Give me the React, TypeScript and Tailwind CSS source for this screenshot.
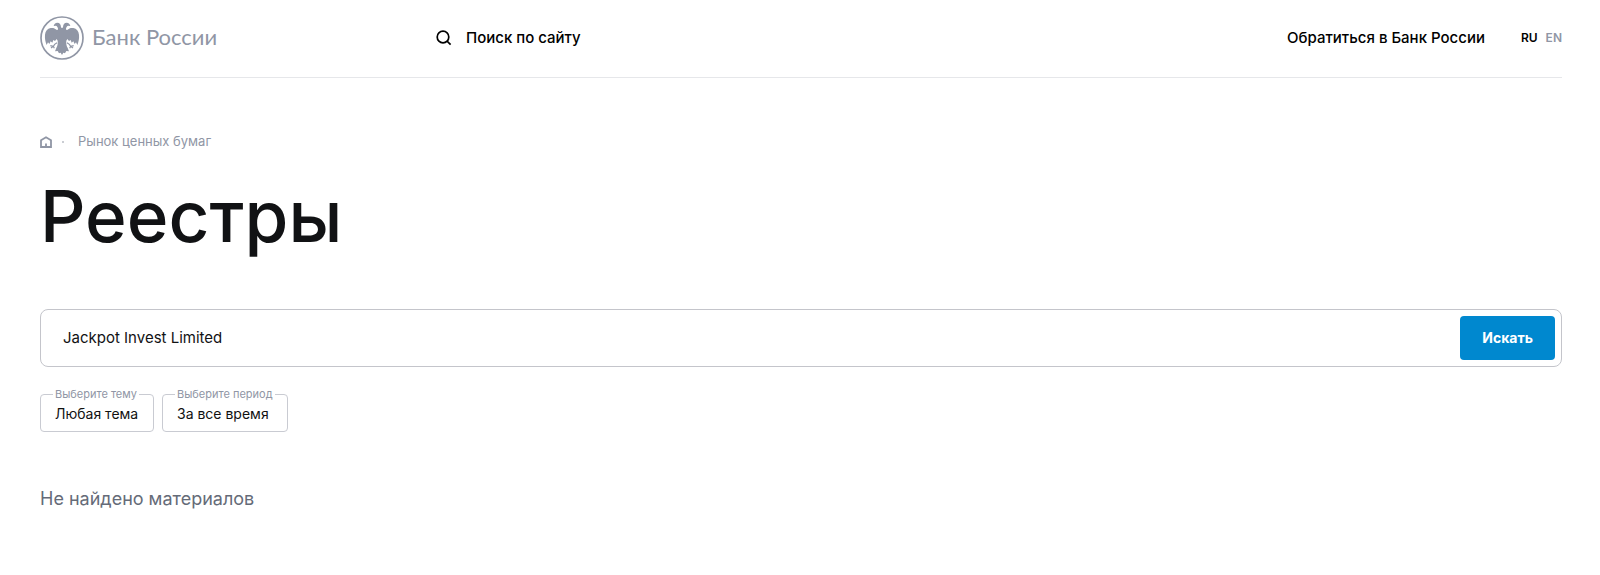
import { useState } from 'react';

function Emblem() {
  return (
    <svg viewBox="0 0 132 132" className="size-11 shrink-0 text-[#9096a5]" fill="currentColor" aria-hidden="true">
      <circle cx="66" cy="66" r="63" fill="none" stroke="currentColor" strokeWidth="5" />
      <path d="M66 37 L63 34 C63 25 59 20 52 20 C46 20 42 24 41 30 L48 29 C52 31 54 35 54 39 C54 43 50 43 47 40 C43 36 38 35 32 36 C22 38 16 46 15 56 C14 67 16 77 20 87 L24 79 L28 84 L32 76 L37 80 L40 72 L45 75 L50 69 L53 74 C54 82 53 89 49 96 L45 106 L53 105 L57 112 L62 110 L66 117 L70 110 L75 112 L79 105 L87 106 L83 96 C79 89 78 82 79 74 L82 69 L87 75 L92 72 L95 80 L100 76 L104 84 L108 79 L112 87 C116 77 118 67 117 56 C116 46 110 38 100 36 C94 35 89 36 85 40 C82 43 78 43 78 39 C78 35 80 31 84 29 L91 30 C90 24 86 20 80 20 C73 20 69 25 69 34 Z" />
      <path d="M51 80 L44 85 L40 91 L31 89 M40 91 L33 96 M40 91 L43 97 M81 80 L88 85 L92 91 L101 89 M92 91 L99 96 M92 91 L89 97" fill="none" stroke="currentColor" strokeWidth="3.5" />
    </svg>
  );
}

function FilterSelect({ id, label, options }: { id: string; label: string; options: string[] }) {
  return (
    <fieldset className="h-11 rounded border border-[#c9cbd2] px-3">
      <legend className="px-0.5 text-[11px] leading-3 text-[#9096a5]">
        <label htmlFor={id}>{label}</label>
      </legend>
      <select id={id} className="block h-7 appearance-none bg-transparent px-0.5 text-sm text-[#111]">
        {options.map((option) => (
          <option key={option}>{option}</option>
        ))}
      </select>
    </fieldset>
  );
}

export default function App() {
  const [query, setQuery] = useState('Jackpot Invest Limited');

  return (
    <div className="bg-white pr-[38px] pl-10 font-['Inter','Liberation_Sans',sans-serif] text-[#111214]">
      <header className="flex h-[78px] items-center border-b border-[#e6e7ea] pb-0.5">
        <div className="flex flex-1 items-center">
          <a href="#" className="flex w-[396px] items-center gap-2">
            <Emblem />
            <span className="pb-0.5 font-['Lato',sans-serif] text-[22px] leading-7 text-[#9096a5]">Банк России</span>
          </a>
          <button type="button" className="flex items-center gap-3.5 text-[15px] leading-5 font-medium text-black">
            <svg viewBox="0 0 16 16" className="size-4" fill="none" stroke="currentColor" strokeWidth="1.7" strokeLinecap="square" aria-hidden="true">
              <circle cx="7" cy="7" r="5.8" />
              <path d="M11.5 11.5 L14 14" />
            </svg>
            Поиск по сайту
          </button>
        </div>
        <a href="#" className="text-[15px] leading-5 font-medium text-black">Обратиться в Банк России</a>
        <nav className="ml-9 flex gap-2 text-xs font-semibold" aria-label="Язык">
          <a href="#" className="text-black">RU</a>
          <a href="#" className="text-[#9096a5]">EN</a>
        </nav>
      </header>

      <main>
        <nav className="mt-[54px] flex h-5 items-center text-[13px] text-[#9096a5]" aria-label="Навигация">
          <a href="#" aria-label="Главная">
            <svg viewBox="0 0 12 12" className="size-3" fill="none" stroke="currentColor" strokeWidth="1.8" aria-hidden="true">
              <path d="M1 4.2 L6 1.2 L11 4.2 V11 H1 Z" />
              <path d="M6 7.5 V10" />
            </svg>
          </a>
          <span className="mx-2.5 size-0.5 rounded-full bg-[#b9bcc5]" />
          <a href="#" className="ml-1">Рынок ценных бумаг</a>
        </nav>

        <h1 className="mt-[22px] text-[71px] leading-[84px] font-medium">Реестры</h1>

        <form className="mt-[51px] flex h-[58px] items-center rounded-lg border border-[#c4c5cb] pr-1.5" onSubmit={(event) => event.preventDefault()}>
          <input
            type="text"
            aria-label="Поиск по реестрам"
            value={query}
            onChange={(event) => setQuery(event.target.value)}
            className="min-w-0 flex-1 bg-transparent px-[22px] text-[15px] outline-none"
          />
          <button type="submit" className="h-11 rounded bg-[#0088cf] px-[22px] text-sm font-bold text-white">Искать</button>
        </form>

        <div className="mt-[21px] flex gap-2">
          <FilterSelect id="topic" label="Выберите тему" options={['Любая тема']} />
          <FilterSelect id="period" label="Выберите период" options={['За все время']} />
        </div>

        <p className="mt-[53px] pb-16 text-lg leading-7 text-[#656b78]">Не найдено материалов</p>
      </main>
    </div>
  );
}
